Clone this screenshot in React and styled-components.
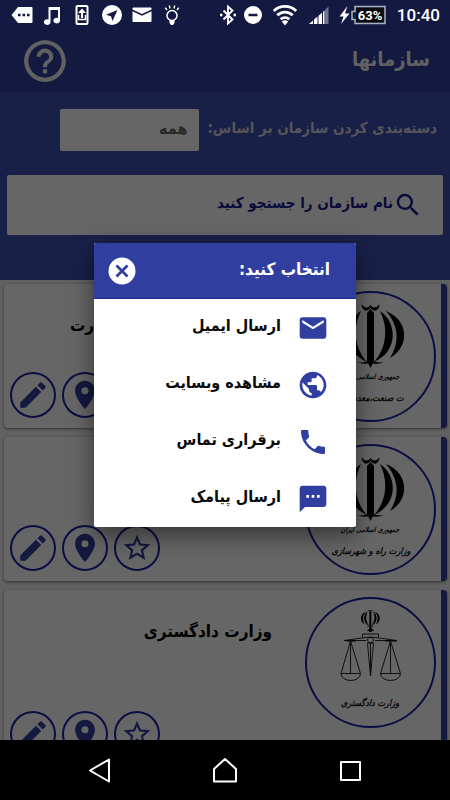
import React from "react";
import styled, { createGlobalStyle, ThemeProvider } from "styled-components";
import {
  MdEmail,
  MdPublic,
  MdSms,
  MdHelpOutline,
  MdSearch,
  MdPlace,
  MdStarBorder,
} from "react-icons/md";

const theme = {
  primary: "#303f9f",
  primaryLight: "#3f51b5",
  outline: "#1a24a6",
  ink: "#161a96",
  page: "#f2f2f2",
  statusBar: "#131940",
};

const GlobalStyle = createGlobalStyle`
  *, *::before, *::after { box-sizing: border-box; }
  body {
    margin: 0;
    font-family: "DejaVu Sans Condensed", "DejaVu Sans", sans-serif;
    background: #000;
  }
  button, input, select { font: inherit; color: inherit; }
`;

const Screen = styled.div`
  display: flex;
  flex-direction: column;
  height: 100vh;
  overflow: hidden;
`;

/* ---------- Device status bar ---------- */

const StatusBar = styled.div`
  flex: none;
  display: flex;
  align-items: center;
  justify-content: space-between;
  height: 30px;
  padding: 0 10px;
  background: ${(p) => p.theme.statusBar};
  color: #fff;
`;

const StatusGroup = styled.div`
  display: flex;
  align-items: center;
  gap: 6px;
`;

const Clock = styled.time`
  margin-left: 4px;
  font: 500 17px/24px Roboto, sans-serif;
`;

const BatteryLabel = styled.text`
  font: 700 13px Roboto, sans-serif;
  fill: #fff;
`;

const Glyph = ({ w = 24, children }) => (
  <svg width={w} height="24" viewBox={`0 0 ${w} 24`} fill="currentColor" aria-hidden="true">
    {children}
  </svg>
);

const DeviceStatus = () => (
  <StatusBar>
    <StatusGroup>
      <Glyph>
        <path
          fillRule="evenodd"
          d="M8 4h13.500a1 1 0 0 1 1 1v14a1 1 0 0 1-1 1H8l-6.500-8zM8 10.700v2.600h2.600v-2.600zm4.500 0v2.600h2.600v-2.600zm4.500 0v2.600h2.600v-2.600z"
        />
      </Glyph>
      <Glyph>
        <path d="M8.500 4H20v13.500a3.300 2.800 0 1 1-2-2.500V7h-7.500v12a3.300 2.800 0 1 1-2-2.500z" />
      </Glyph>
      <Glyph>
        <rect x="6.500" y="3" width="11" height="18" rx="1" fill="none" stroke="currentColor" strokeWidth="2" />
        <path d="M12 5.500l4 4.500h-3v5h-2v-5H8z" />
        <path d="M8.500 12v4.500h7V12" fill="none" stroke="currentColor" strokeWidth="1.500" />
      </Glyph>
      <Glyph>
        <path
          fillRule="evenodd"
          d="M12 2a10 10 0 1 1 0 20a10 10 0 0 1 0-20zM17.500 7L6 11.800l5 1.400l1.500 4.800z"
        />
      </Glyph>
      <Glyph>
        <path d="M3.500 4.500h17a1 1 0 0 1 1 1v1L12 11L2.500 6.500v-1a1 1 0 0 1 1-1z" />
        <path d="M2.500 8.300L12 12.800l9.500-4.500V18a1 1 0 0 1-1 1h-17a1 1 0 0 1-1-1z" />
      </Glyph>
      <Glyph>
        <circle cx="12" cy="12.500" r="5" fill="none" stroke="currentColor" strokeWidth="1.500" />
        <path d="M9.500 17h5v3l-1.500 2h-2l-1.500-2z" />
        <path
          d="M10 5.500L9.300 2.500M14 5.500l.7-3M7 7L5.200 4.800M17 7l1.800-2.200"
          stroke="currentColor"
          strokeWidth="1.400"
        />
      </Glyph>
    </StatusGroup>
    <StatusGroup>
      <Glyph w={18}>
        <path
          d="M4.500 7.500l9 9L9 20.500V3.500l4.500 4l-9 9"
          fill="none"
          stroke="currentColor"
          strokeWidth="1.900"
        />
        <path d="M1 10.800h2.400v2.400H1zM14.600 10.800H17v2.400h-2.400z" />
      </Glyph>
      <Glyph w={20}>
        <path fillRule="evenodd" d="M10 3a9 9 0 1 1 0 18a9 9 0 0 1 0-18zM5.500 10.700v2.600h9v-2.600z" />
      </Glyph>
      <Glyph w={32}>
        <g fill="none" stroke="currentColor" strokeWidth="2.800">
          <path d="M4.800 8a16 16 0 0 1 22.400 0" />
          <path d="M8.300 12.200a11 11 0 0 1 15.400 0" />
          <path d="M11.600 16.300a6.500 6.500 0 0 1 8.800 0" />
        </g>
        <path d="M16 22.500l-3.200-4a5 5 0 0 1 6.400 0z" />
      </Glyph>
      <Glyph w={24}>
        <path d="M2 21l4-3.500V21zM7 16.600l3.500-3V21H7zM11.500 12.700l3.500-3V21h-3.500zM16 8.800l1.500-1.300V21H16z" />
        <path d="M18 7l3.500-3.500V21H18z" opacity="0.400" />
      </Glyph>
      <Glyph w={50}>
        <path d="M10.500 3L2.500 13.500h4L4 21l8.500-10.500h-4.500z" />
        <path
          d="M18 3.500h30v17H18v-4h-3v-8h3z"
          fill="none"
          stroke="#aeb0b8"
          strokeWidth="1.500"
        />
        <path d="M19.500 5h27v14h-27z" fill="#08090f" />
        <BatteryLabel x="33" y="17" textAnchor="middle">63%</BatteryLabel>
      </Glyph>
      <Clock>10:40</Clock>
    </StatusGroup>
  </StatusBar>
);

/* ---------- Icons ---------- */

const FilledIcon = ({ size, d }) => (
  <svg width={size} height={size} viewBox="0 0 24 24" fill="currentColor" aria-hidden="true">
    <path d={d} />
  </svg>
);

const PencilIcon = ({ size }) => (
  <FilledIcon
    size={size}
    d="M3 17.250V21h3.750L17.810 9.940l-3.750-3.750L3 17.250zM20.710 7.040c.390-.390.390-1.020 0-1.410l-2.340-2.340a1 1 0 0 0-1.410 0l-1.830 1.830 3.750 3.750 1.830-1.830z"
  />
);

const HandsetIcon = ({ size }) => (
  <FilledIcon
    size={size}
    d="M6.620 10.790c1.440 2.830 3.760 5.140 6.590 6.590l2.200-2.200c.270-.270.670-.360 1.020-.240 1.120.370 2.330.570 3.570.570.550 0 1 .200 1 .700V20.500c0 .300-.300.500-.700.500C10.900 21 3 13.100 3 3.700c0-.400.200-.700.500-.700h4.300c.500 0 .700.450.700 1 0 1.250.200 2.450.570 3.570.110.350.030.740-.250 1.020l-2.200 2.200z"
  />
);

const CloseIcon = () => (
  <svg width="32" height="32" viewBox="0 0 32 32" aria-hidden="true">
    <circle cx="16" cy="16" r="13.500" fill="#fff" />
    <path d="M10.500 10.500l11 11M21.500 10.500l-11 11" stroke={theme.primary} strokeWidth="2.800" />
  </svg>
);

/* ---------- Application page ---------- */

const Stage = styled.div`
  position: relative;
  flex: 1;
  min-height: 0;
  overflow: hidden;
  background: ${(p) => p.theme.page};
`;

const AppBar = styled.header`
  display: flex;
  align-items: center;
  justify-content: space-between;
  height: 62px;
  padding: 0 20px;
  background: ${(p) => p.theme.primary};
  color: #f2f2f2;
`;

const PageTitle = styled.h1`
  margin: 0;
  padding-bottom: 4px;
  font-size: 20px;
  font-weight: 700;
  line-height: 32px;
`;

const PlainButton = styled.button`
  display: flex;
  padding: 0;
  border: 0;
  background: none;
  cursor: pointer;
`;

const Filters = styled.form`
  display: flex;
  flex-direction: column;
  gap: 24px;
  padding: 17px 7px 45px;
  background: ${(p) => p.theme.primaryLight};
`;

const CategoryRow = styled.div`
  display: flex;
  align-items: center;
  gap: 8px;
  padding: 0 6px;
`;

const CategoryLabel = styled.label`
  padding-bottom: 4px;
  color: #d4d4de;
  font-size: 15px;
  font-weight: 700;
  white-space: nowrap;
`;

const CategorySelect = styled.select`
  width: 139px;
  height: 42px;
  padding: 0 12px 4px;
  border: 0;
  border-radius: 2px;
  appearance: none;
  background: #fff;
  color: #666;
  font-size: 16px;
  font-weight: 700;
`;

const SearchBox = styled.label`
  display: flex;
  align-items: center;
  height: 60px;
  padding: 0 20px;
  border-radius: 2px;
  background: #fff;
  color: ${(p) => p.theme.ink};
`;

const SearchInput = styled.input`
  flex: 1;
  min-width: 0;
  padding: 0 0 4px;
  border: 0;
  outline: 0;
  background: none;
  font-size: 15px;
  font-weight: 700;
  line-height: 28px;

  &::placeholder {
    color: inherit;
    opacity: 1;
  }
`;

const CardList = styled.ul`
  display: flex;
  flex-direction: column;
  gap: 9px;
  margin: 0;
  padding: 4px 3px 4px 4px;
  list-style: none;
`;

const Card = styled.li`
  display: flex;
  gap: 33px;
  min-height: ${(p) => (p.$tall ? 177 : 144)}px;
  padding: 7px 5px 10px 6px;
  border-right: 6px solid ${(p) => p.theme.primary};
  border-radius: 4px;
  background: #fff;
  box-shadow: 0 1px 3px rgba(0, 0, 0, 0.5);
`;

const Emblem = styled.svg`
  flex: none;
  width: 131px;
  height: 131px;
  margin-bottom: -4px;
`;

const EmblemText = styled.text`
  font: italic 700 ${(p) => p.$size}px "DejaVu Sans Condensed", "DejaVu Sans", sans-serif;
  text-anchor: middle;
  fill: #222;
`;

const CardBody = styled.div`
  flex: 1;
  display: flex;
  flex-direction: column;
  justify-content: space-between;
  padding-top: 20px;
`;

const CardTitle = styled.h2`
  margin: 0;
  font-size: 17px;
  font-weight: 700;
  line-height: 28px;
  white-space: nowrap;
`;

const CardActions = styled.div`
  display: flex;
  justify-content: flex-end;
  gap: 6px;
`;

const RoundButton = styled.button`
  display: grid;
  place-items: center;
  width: 46px;
  height: 46px;
  padding: 0;
  border: 2px solid ${(p) => p.theme.outline};
  border-radius: 50%;
  background: none;
  color: ${(p) => p.theme.primary};
  cursor: pointer;
`;

const StateMark = () => (
  <>
    <path d="M57 14q1 6 5 5q3-1 3.500-3q.5 2 3.500 3q4 1 5-5q-1 3-4.500 3q-3 0-4-2.500q-1 2.500-4 2.500q-3.500 0-4.500-3z" strokeWidth="1" stroke="#000" />
    <path d="M65.500 18l3.500 4v48l-3.500 7l-3.500-7V22z" />
    <path d="M75 20C92 31 94 60 69 71C81 58 84 38 75 20z" />
    <path d="M81 20C104 29 105 56 85 67C94 53 95 36 81 20z" />
    <path d="M56 20C39 31 37 60 62 71C50 58 47 38 56 20z" />
    <path d="M50 20C27 29 26 56 46 67C37 53 36 36 50 20z" />
    <path d="M51 71q8 2 14.500-3q6.500 5 14.500 3q-7 3-14.500 1q-7.500 2-14.500-1z" />
  </>
);

const StateEmblem = ({ lines }) => (
  <>
    <StateMark />
    <EmblemText x="65" y="88" $size={7}>{lines[0]}</EmblemText>
    <EmblemText x="66" y="110" $size={9}>{lines[1]}</EmblemText>
  </>
);

const JusticeEmblem = ({ lines }) => (
  <>
    <g transform="translate(47 9) scale(0.280)">
      <StateMark />
    </g>
    <path d="M64.300 30h2.400v5h-2.400zM62.500 32.500h6v1.500h-6z" />
    <g fill="none" stroke="#111" strokeWidth="0.900">
      <path d="M57.500 40v-3h16v3M39 43.500l23-3.200h7l23 3.200M39 43.500h22M70 43.500h22" />
      <circle cx="65.500" cy="43" r="3" />
      <path d="M62.500 46l3 33l3-33zM65.500 46v33" />
      <path d="M45.500 44L36 76.500h19.500zM45.500 44v32.500M36 76.500a9.700 7 0 0 0 19.500 0" />
      <path d="M85.500 44L75.500 76.500h20zM85.500 44v32.500M75.500 76.500a10 7 0 0 0 20 0" />
    </g>
    <path d="M41.500 43h9v1.500h-9zM80.500 43h11v1.500h-11z" />
    <EmblemText x="65" y="109" $size={9}>{lines[0]}</EmblemText>
  </>
);

const organizations = [
  {
    name: "وزارت صنعت، معدن تجارت",
    Mark: StateEmblem,
    lines: ["جمهوری اسلامی ایران", "ت صنعت،معدن تجا"],
  },
  {
    name: "وزارت راه و شهرسازی",
    Mark: StateEmblem,
    lines: ["جمهوری اسلامی ایران", "وزارت راه و شهرسازی"],
  },
  {
    name: "وزارت دادگستری",
    Mark: JusticeEmblem,
    lines: ["وزارت دادگستری"],
    tall: true,
  },
];

const OrganizationCard = ({ name, Mark, lines, tall }) => (
  <Card $tall={tall}>
    <Emblem viewBox="0 0 131 131" fill="#000" role="img" aria-label={name}>
      <circle cx="65.500" cy="65.500" r="64.500" fill="none" stroke={theme.outline} strokeWidth="2" />
      <Mark lines={lines} />
    </Emblem>
    <CardBody>
      <CardTitle>{name}</CardTitle>
      <CardActions>
        <RoundButton type="button" aria-label="نشان کردن"><MdStarBorder size={32} /></RoundButton>
        <RoundButton type="button" aria-label="مکان"><MdPlace size={34} /></RoundButton>
        <RoundButton type="button" aria-label="ویرایش"><PencilIcon size={34} /></RoundButton>
      </CardActions>
    </CardBody>
  </Card>
);

/* ---------- Dialog ---------- */

const Scrim = styled.div`
  position: absolute;
  inset: 0;
  display: grid;
  place-items: center;
  background: rgba(0, 0, 0, 0.6);
`;

const Dialog = styled.section`
  width: 262px;
  border-radius: 2px;
  overflow: hidden;
  background: #fff;
  box-shadow: 0 8px 24px rgba(0, 0, 0, 0.5);
`;

const DialogHeader = styled.header`
  display: flex;
  align-items: center;
  justify-content: space-between;
  height: 56px;
  padding: 0 26px 0 12px;
  border-bottom: 1px solid #1a2a90;
  background: ${(p) => p.theme.primary};
  color: #fff;
`;

const DialogTitle = styled.h2`
  margin: 0;
  padding-bottom: 4px;
  font-size: 17px;
  font-weight: 700;
  line-height: 28px;
`;

const OptionList = styled.ul`
  margin: 0;
  padding: 0;
  list-style: none;
`;

const Option = styled.button`
  display: flex;
  align-items: center;
  gap: 16px;
  width: 100%;
  height: 57px;
  padding: 0 27px;
  border: 0;
  background: none;
  color: #0a0a0a;
  font-size: 16px;
  font-weight: 700;
  cursor: pointer;

  svg {
    flex: none;
    color: ${(p) => p.theme.primary};
  }
`;

const OptionText = styled.span`
  padding-bottom: 4px;
`;

const options = [
  { label: "ارسال ایمیل", Icon: MdEmail },
  { label: "مشاهده وبسایت", Icon: MdPublic },
  { label: "برقراری تماس", Icon: HandsetIcon },
  { label: "ارسال پیامک", Icon: MdSms },
];

/* ---------- Device navigation bar ---------- */

const NavBar = styled.nav`
  flex: none;
  display: grid;
  grid-template-columns: repeat(3, 1fr);
  justify-items: center;
  align-items: center;
  height: 60px;
  padding: 0 8%;
  background: #000;
  color: #fff;
`;

const NavIcon = ({ d }) => (
  <svg width="28" height="28" viewBox="0 0 28 28" fill="none" stroke="currentColor" strokeWidth="2" strokeLinejoin="round" aria-hidden="true">
    <path d={d} />
  </svg>
);

export default function App() {
  return (
    <ThemeProvider theme={theme}>
      <GlobalStyle />
      <Screen>
        <DeviceStatus />
        <Stage dir="rtl" lang="fa">
          <AppBar>
            <PageTitle>سازمانها</PageTitle>
            <PlainButton type="button" aria-label="راهنما"><MdHelpOutline size={50} /></PlainButton>
          </AppBar>
          <Filters>
            <CategoryRow>
              <CategoryLabel htmlFor="category">دسته‌بندی کردن سازمان بر اساس:</CategoryLabel>
              <CategorySelect id="category">
                <option>همه</option>
              </CategorySelect>
            </CategoryRow>
            <SearchBox>
              <MdSearch size={30} aria-hidden="true" />
              <SearchInput type="search" aria-label="جستجو" placeholder="نام سازمان را جستجو کنید" />
            </SearchBox>
          </Filters>
          <CardList>
            {organizations.map((org) => (
              <OrganizationCard key={org.name} {...org} />
            ))}
          </CardList>
          <Scrim>
            <Dialog role="dialog" aria-modal="true" aria-labelledby="dialog-title">
              <DialogHeader>
                <DialogTitle id="dialog-title">انتخاب کنید:</DialogTitle>
                <PlainButton type="button" aria-label="بستن"><CloseIcon /></PlainButton>
              </DialogHeader>
              <OptionList>
                {options.map(({ label, Icon }) => (
                  <li key={label}>
                    <Option type="button">
                      <Icon size={32} />
                      <OptionText>{label}</OptionText>
                    </Option>
                  </li>
                ))}
              </OptionList>
            </Dialog>
          </Scrim>
        </Stage>
        <NavBar>
          <PlainButton type="button" aria-label="Back"><NavIcon d="M24 3.500v22L5 14.500z" /></PlainButton>
          <PlainButton type="button" aria-label="Home"><NavIcon d="M3 25.500V13L14 3l11 10v12.500z" /></PlainButton>
          <PlainButton type="button" aria-label="Recent apps"><NavIcon d="M4 6h19v18H4z" /></PlainButton>
        </NavBar>
      </Screen>
    </ThemeProvider>
  );
}
